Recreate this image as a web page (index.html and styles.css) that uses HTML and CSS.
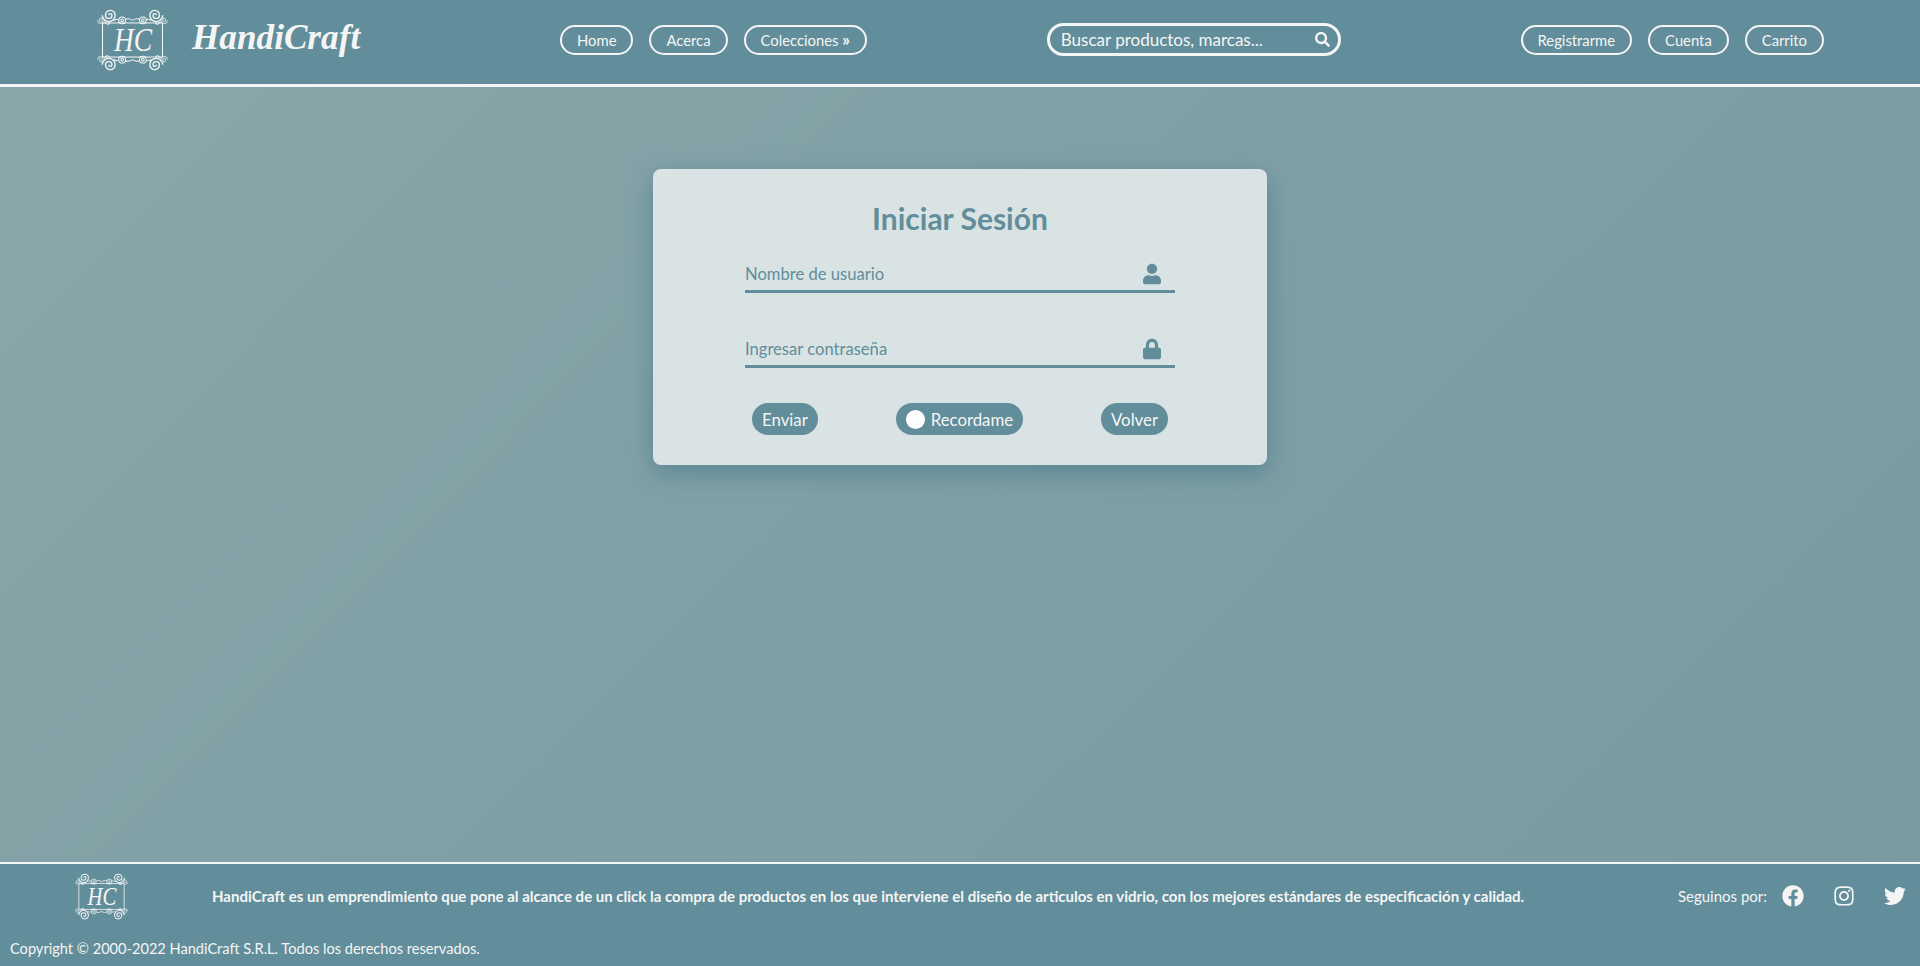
FILE: index.html
```html
<!DOCTYPE html>
<html lang="es">
<head>
  <meta charset="UTF-8">
  <meta name="viewport" content="width=device-width, initial-scale=1.0">
  <title>HandiCraft</title>
  <link rel="stylesheet" href="styles.css">
</head>
<body>
  <svg class="sprite" aria-hidden="true">
    <defs>
      <g id="swirl">
        <path d="M0 0a1.2 1.2 0 0 1 2.4 0a2.4 2.4 0 0 1-4.8 0a3.6 3.6 0 0 1 7.2 0a4.8 4.8 0 0 1-9.6 0"/>
      </g>
      <g id="corner">
        <use href="#swirl" transform="translate(13 7) scale(1.3)"/>
        <use href="#swirl" transform="translate(5.5 12) scale(.7)"/>
        <path d="M9 14c2 2 3.500 2.500 5 .5"/>
        <circle cx="26" cy="12" r="3.300"/>
        <circle cx="26" cy="12" r="1.300"/>
        <path d="M18 12.500c1.500-2 3-2 4.700-1M29.300 11c2-.8 4-.8 6.700 1"/>
      </g>
      <symbol id="logo" viewBox="2 1 68 60">
        <g fill="none" stroke="#f5f5f5" stroke-width="1">
          <rect x="7" y="14.500" width="58" height="33"/>
          <use href="#corner"/>
          <use href="#corner" transform="matrix(-1 0 0 1 72 0)"/>
          <use href="#corner" transform="matrix(1 0 0 -1 0 62)"/>
          <use href="#corner" transform="matrix(-1 0 0 -1 72 62)"/>
        </g>
        <text x="18" y="42" textLength="37" lengthAdjust="spacingAndGlyphs" class="logo-text">HC</text>
      </symbol>
    </defs>
  </svg>

  <header class="topbar">
    <a class="brand" href="#">
      <svg class="brand-logo"><use href="#logo"/></svg>
      <span class="brand-name">HandiCraft</span>
    </a>
    <nav class="nav">
      <a class="pill" href="#">Home</a>
      <a class="pill" href="#">Acerca</a>
      <a class="pill" href="#">Colecciones <b class="more">»</b></a>
    </nav>
    <form class="search">
      <input type="text" placeholder="Buscar productos, marcas...">
      <svg class="search-icon" viewBox="0 0 512 512"><path d="M505 442.7L405.3 343c-4.5-4.5-10.6-7-17-7H372c27.6-35.3 44-79.7 44-128C416 93.1 322.9 0 208 0S0 93.1 0 208s93.1 208 208 208c48.3 0 92.7-16.4 128-44v16.3c0 6.4 2.5 12.5 7 17l99.7 99.7c9.4 9.4 24.6 9.4 33.9 0l28.3-28.3c9.4-9.4 9.4-24.6.1-34zM208 336c-70.7 0-128-57.2-128-128 0-70.7 57.2-128 128-128 70.7 0 128 57.2 128 128 0 70.7-57.2 128-128 128z"/></svg>
    </form>
    <nav class="nav nav-user">
      <a class="pill" href="#">Registrarme</a>
      <a class="pill" href="#">Cuenta</a>
      <a class="pill" href="#">Carrito</a>
    </nav>
  </header>

  <main class="content">
    <form class="login">
      <h1>Iniciar Sesión</h1>
      <div class="field">
        <input type="text" placeholder="Nombre de usuario">
        <svg class="field-icon" viewBox="0 0 448 512"><path d="M224 256c70.7 0 128-57.3 128-128S294.7 0 224 0 96 57.3 96 128s57.3 128 128 128zm89.6 32h-16.7c-22.2 10.2-46.9 16-72.9 16s-50.6-5.8-72.9-16h-16.7C60.2 288 0 348.2 0 422.4V464c0 26.5 21.5 48 48 48h352c26.5 0 48-21.5 48-48v-41.6c0-74.2-60.2-134.4-134.4-134.4z"/></svg>
      </div>
      <div class="field">
        <input type="password" placeholder="Ingresar contraseña">
        <svg class="field-icon" viewBox="0 0 448 512"><path d="M400 224h-24v-72C376 68.2 307.8 0 224 0S72 68.2 72 152v72H48c-26.5 0-48 21.5-48 48v192c0 26.5 21.5 48 48 48h352c26.5 0 48-21.5 48-48V272c0-26.5-21.5-48-48-48zm-104 0H152v-72c0-39.7 32.3-72 72-72s72 32.3 72 72v72z"/></svg>
      </div>
      <div class="actions">
        <button type="submit" class="btn">Enviar</button>
        <label class="btn remember"><span class="knob"></span>Recordame</label>
        <button type="button" class="btn">Volver</button>
      </div>
    </form>
  </main>

  <footer class="footer">
    <div class="footer-row">
      <svg class="footer-logo"><use href="#logo"/></svg>
      <p class="footer-text">HandiCraft es un emprendimiento que pone al alcance de un click la compra de productos en los que interviene el diseño de articulos en vidrio, con los mejores estándares de especificación y calidad.</p>
      <div class="social">
        <span class="social-label">Seguinos por:</span>
        <a href="#"><svg viewBox="0 0 512 512"><path d="M504 256C504 119 393 8 256 8S8 119 8 256c0 123.78 90.69 226.38 209.25 245V327.69h-63V256h63v-54.64c0-62.15 37-96.48 93.67-96.48 27.14 0 55.52 4.84 55.52 4.84v61h-31.28c-30.8 0-40.41 19.12-40.41 38.73V256h68.78l-11 71.69h-57.78V501C413.31 482.38 504 379.78 504 256z"/></svg></a>
        <a href="#"><svg viewBox="0 0 448 512"><path d="M224.1 141c-63.6 0-114.9 51.3-114.9 114.9s51.3 114.9 114.9 114.9S339 319.5 339 255.9 287.7 141 224.1 141zm0 189.6c-41.1 0-74.7-33.5-74.7-74.7s33.5-74.7 74.7-74.7 74.7 33.5 74.7 74.7-33.6 74.7-74.7 74.7zm146.4-194.3c0 14.9-12 26.8-26.8 26.8-14.9 0-26.8-12-26.8-26.8s12-26.8 26.8-26.8 26.8 12 26.8 26.8zm76.1 27.2c-1.7-35.9-9.9-67.7-36.2-93.9-26.2-26.2-58-34.4-93.9-36.2-37-2.1-147.9-2.1-184.9 0-35.8 1.7-67.6 9.9-93.9 36.1s-34.4 58-36.2 93.9c-2.1 37-2.1 147.9 0 184.9 1.7 35.9 9.9 67.7 36.2 93.9s58 34.4 93.9 36.2c37 2.1 147.9 2.1 184.9 0 35.9-1.7 67.7-9.9 93.9-36.2 26.2-26.2 34.4-58 36.2-93.9 2.1-37 2.1-147.8 0-184.8zM398.8 388c-7.8 19.6-22.9 34.7-42.6 42.6-29.5 11.7-99.5 9-132.1 9s-102.7 2.6-132.1-9c-19.6-7.8-34.7-22.9-42.6-42.6-11.7-29.5-9-99.5-9-132.1s-2.6-102.7 9-132.1c7.8-19.6 22.9-34.7 42.6-42.6 29.5-11.7 99.5-9 132.1-9s102.7-2.6 132.1 9c19.6 7.8 34.7 22.9 42.6 42.6 11.7 29.5 9 99.5 9 132.1s2.7 102.7-9 132.1z"/></svg></a>
        <a href="#"><svg viewBox="0 0 512 512"><path d="M459.37 151.716c.325 4.548.325 9.097.325 13.645 0 138.72-105.583 298.558-298.558 298.558-59.452 0-114.68-17.219-161.137-47.106 8.447.974 16.568 1.299 25.34 1.299 49.055 0 94.213-16.568 130.274-44.832-46.132-.975-84.792-31.188-98.112-72.772 6.498.974 12.995 1.624 19.818 1.624 9.421 0 18.843-1.3 27.614-3.573-48.081-9.747-84.143-51.98-84.143-102.985v-1.299c13.969 7.797 30.214 12.67 47.431 13.319-28.264-18.843-46.781-51.005-46.781-87.391 0-19.492 5.197-37.36 14.294-52.954 51.655 63.675 129.3 105.258 216.365 109.807-1.624-7.797-2.599-15.918-2.599-24.04 0-57.828 46.782-104.934 104.934-104.934 30.213 0 57.502 12.67 76.67 33.137 23.715-4.548 46.456-13.32 66.599-25.34-7.798 24.366-24.366 44.833-46.132 57.827 21.117-2.273 41.584-8.122 60.426-16.243-14.292 20.791-32.161 39.308-52.628 54.253z"/></svg></a>
      </div>
    </div>
    <p class="copyright">Copyright © 2000-2022 HandiCraft S.R.L. Todos los derechos reservados.</p>
  </footer>
</body>
</html>
```

FILE: styles.css
```css
* {
  box-sizing: border-box;
}

html,
body {
  height: 100%;
}

body {
  margin: 0;
  display: flex;
  flex-direction: column;
  min-height: 100vh;
  font-family: "Lato", "Open Sans", sans-serif;
  color: #f5f5f5;
  background: linear-gradient(135deg, #8ba7aa 0%, #80a0a5 45%, #799aa0 100%);
}

a {
  color: inherit;
  text-decoration: none;
}

.sprite {
  width: 0;
  height: 0;
  display: block;
}

.logo-text {
  font-family: "Liberation Serif", serif;
  font-style: italic;
  font-size: 32px;
  fill: #f5f5f5;
}

/* header */
.topbar {
  flex: none;
  height: 87px;
  display: flex;
  align-items: center;
  padding: 0 96px 5px 97px;
  background-color: #618e9a;
  border-bottom: 3px solid #f5f5f5;
}

.brand {
  display: flex;
  align-items: center;
  gap: 24px;
  width: 463px;
}

.brand-logo {
  width: 71px;
  height: 62px;
}

.brand-name {
  padding-bottom: 3px;
  font-family: "Liberation Serif", serif;
  font-style: italic;
  font-weight: bold;
  font-size: 35.200px;
}

.nav {
  display: flex;
  gap: 16px;
}

.nav-user {
  margin-left: auto;
}

.pill {
  height: 30px;
  padding: 0 15px;
  display: flex;
  align-items: center;
  font-size: 14.800px;
  white-space: pre;
  border: 2px solid #f5f5f5;
  border-radius: 15px;
}

.more {
  font-size: 17px;
  line-height: 1;
}

.search {
  margin-left: auto;
  width: 294px;
  height: 33px;
  display: flex;
  align-items: center;
  padding: 0 8px 0 11px;
  border: 3px solid #f5f5f5;
  border-radius: 17px;
}

.search input {
  flex: 1;
  min-width: 0;
  padding: 0;
  border: 0;
  outline: none;
  background: transparent;
  font-family: inherit;
  font-size: 17px;
  color: #f5f5f5;
}

.search input::placeholder {
  color: #f5f5f5;
  opacity: 1;
}

.search-icon {
  width: 15px;
  height: 15px;
  fill: #f5f5f5;
}

/* login */
.content {
  flex: 1;
  padding-top: 82px;
}

.login {
  width: 614px;
  height: 296px;
  margin: 0 auto;
  padding: 33px 92px 0;
  background-color: rgba(255, 255, 255, .7);
  border-radius: 8px;
  box-shadow: 0 8px 24px rgba(85, 130, 145, .9);
}

.login h1 {
  margin: 0 0 21px;
  font-size: 30px;
  line-height: 32px;
  font-weight: bold;
  text-align: center;
  color: #618e9a;
}

.field {
  height: 38px;
  margin-bottom: 37px;
  display: flex;
  align-items: center;
  border-bottom: 3px solid #618e9a;
}

.field input {
  flex: 1;
  margin-top: 2px;
  padding: 0;
  border: 0;
  outline: none;
  background: transparent;
  font-family: inherit;
  font-size: 16.600px;
  color: #618e9a;
}

.field input::placeholder {
  color: #618e9a;
  opacity: 1;
}

.field-icon {
  width: 18px;
  height: 22px;
  margin: 2px 14px 0 0;
  fill: #618e9a;
}

.actions {
  margin-top: -2px;
  padding: 0 7px;
  display: flex;
  justify-content: space-between;
}

.btn {
  height: 32px;
  padding: 0 10px;
  display: flex;
  align-items: center;
  border: 0;
  border-radius: 16px;
  background-color: #618e9a;
  font-family: inherit;
  font-size: 16.800px;
  color: #f5f5f5;
}

.knob {
  width: 19px;
  height: 19px;
  margin-right: 6px;
  border-radius: 50%;
  background-color: #fff;
}

/* footer */
.footer {
  flex: none;
  height: 104px;
  background-color: #618e9a;
  border-top: 2px solid #f5f5f5;
}

.footer-row {
  height: 70px;
  display: flex;
  align-items: center;
  padding: 0 14px 6px 75px;
}

.footer-logo {
  width: 53px;
  height: 47px;
}

.footer-text {
  margin: 0 0 0 84px;
  width: 1314px;
  font-size: 15px;
  font-weight: bold;
  white-space: nowrap;
}

.social {
  margin-left: 152px;
  display: flex;
  align-items: center;
}

.social-label {
  font-size: 15px;
  margin-right: 15px;
}

.social a {
  display: flex;
  width: 22px;
  margin-right: 29px;
}

.social a:last-child {
  margin-right: 0;
}

.social svg {
  width: 22px;
  height: 22px;
  fill: #f5f5f5;
}

.copyright {
  margin: 0;
  padding: 6px 0 0 10px;
  font-size: 14.600px;
}
```
